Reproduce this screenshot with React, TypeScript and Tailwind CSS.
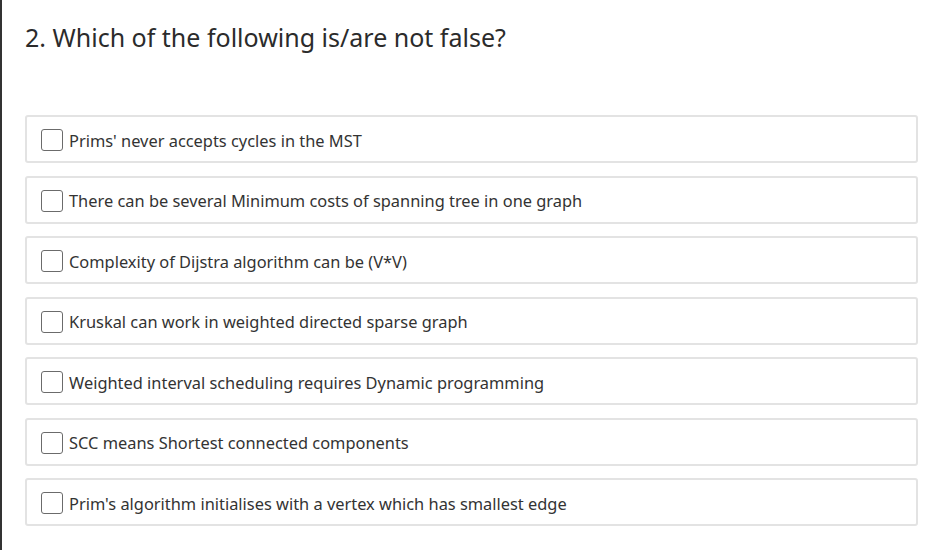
const OPTIONS = [
  "Prims' never accepts cycles in the MST",
  'There can be several Minimum costs of spanning tree in one graph',
  'Complexity of Dijstra algorithm can be (V*V)',
  'Kruskal can work in weighted directed sparse graph',
  'Weighted interval scheduling requires Dynamic programming',
  'SCC means Shortest connected components',
  "Prim's algorithm initialises with a vertex which has smallest edge",
]

function OptionRow({ label }: { label: string }) {
  return (
    <label className="flex h-[48px] items-center rounded-[3px] border-2 border-[#e3e3e3] bg-white pl-[14px]">
      <span className="mt-[2px] h-[22px] w-[22px] shrink-0 rounded-[3px] border border-[#6b6b6b] bg-white" />
      <span className="ml-[6px] pt-[4px] text-[16.4px] text-[#333]">{label}</span>
    </label>
  )
}

export default function App() {
  return (
    <div
      className="h-[550px] w-[939px] overflow-hidden border-l-2 border-[#333] bg-white pl-[23px] pr-[21px]"
      style={{ fontFamily: '"Noto Sans", "Open Sans", sans-serif' }}
    >
      <h2 className="pt-[17px] text-[25px] leading-[40px] text-[#2b2b2b]">
        2. Which of the following is/are not false?
      </h2>
      <div className="mt-[58px] flex flex-col gap-[12.5px]">
        {OPTIONS.map(o => (
          <OptionRow key={o} label={o} />
        ))}
      </div>
    </div>
  )
}
